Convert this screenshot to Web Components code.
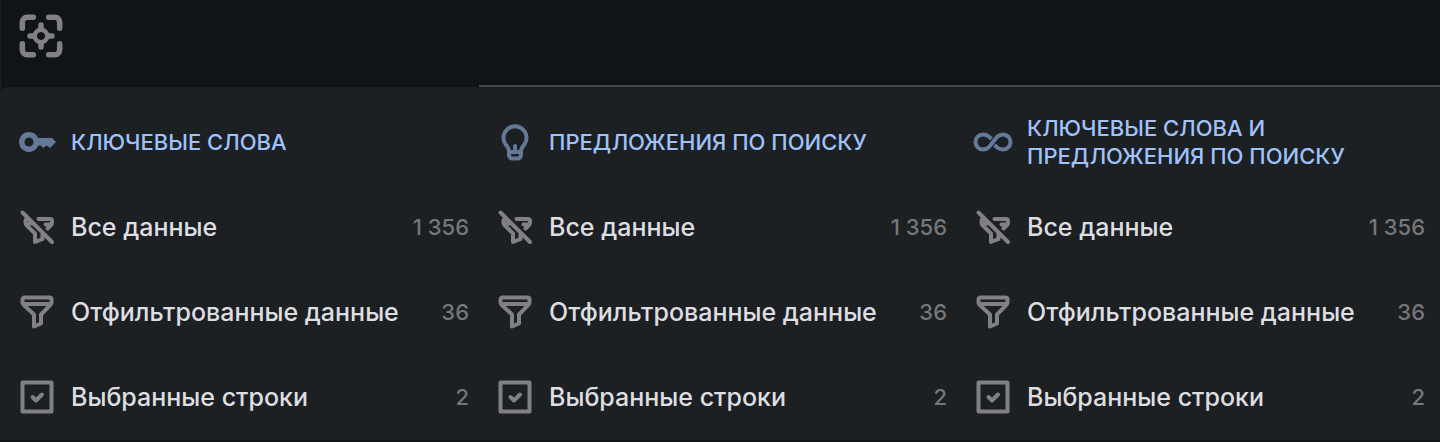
<!DOCTYPE html>
<html lang="ru">
<head>
<meta charset="utf-8">
<meta name="viewport" content="width=device-width, initial-scale=1">
<title>Данные</title>
<style>
    body
    {
        margin: 0;
        min-height: 100vh;
        background: #101318;
        font-family: Inter, "Liberation Sans", sans-serif;
        color: #dedee2;
    }
</style>
</head>
<body>
<export-panel>
    <focus-button slot="toolbar"></focus-button>
    <export-group icon="key" heading="Ключевые слова">
        <export-item icon="filter-off" count="1 356">Все данные</export-item>
        <export-item icon="filter" count="36">Отфильтрованные данные</export-item>
        <export-item icon="check" count="2">Выбранные строки</export-item>
    </export-group>
    <export-group icon="bulb" heading="Предложения по поиску">
        <export-item icon="filter-off" count="1 356">Все данные</export-item>
        <export-item icon="filter" count="36">Отфильтрованные данные</export-item>
        <export-item icon="check" count="2">Выбранные строки</export-item>
    </export-group>
    <export-group icon="infinity" heading="Ключевые слова и предложения по поиску">
        <export-item icon="filter-off" count="1 356">Все данные</export-item>
        <export-item icon="filter" count="36">Отфильтрованные данные</export-item>
        <export-item icon="check" count="2">Выбранные строки</export-item>
    </export-group>
</export-panel>

<script>
// every icon is drawn on a 40x40 grid
const icons = {
    'key': `<path fill="currentColor" stroke="none" fill-rule="evenodd" d="M12 10a10 10 0 0 1 9.200 6H35l4 4-6 6-3.500-2.500-3 2.500-3-2.500h-2.200A10 10 0 1 1 12 10zm0 5.500a4.500 4.500 0 1 0 0 9 4.500 4.500 0 0 0 0-9z"/>`,
    'bulb': `<path d="M14 33v-4c0-2.500-1.500-4-3-6a11.500 11.500 0 1 1 18 0c-1.500 2-3 3.500-3 6v4a3.500 3.500 0 0 1-3.500 3.500h-5A3.500 3.500 0 0 1 14 33zM14 30h12"/><path d="M20 24v5"/>`,
    'infinity': `<path stroke-linecap="butt" d="M18.500 17l-2.700-2.500C14.200 13.200 12.300 12.500 10 12.500a7.500 7.500 0 0 0 0 15c2.300 0 4.200-.9 5.800-2.300l8.400-10.400C25.800 13.400 27.700 12.500 30 12.500a7.500 7.500 0 0 1 0 15c-2.300 0-4.200-.7-5.800-2L21.500 23"/>`,
    'filter': `<path d="M7.500 5.500h25a2 2 0 0 1 2 2v2.700c0 1-.4 2-1.100 2.700L24 22.500v9l-7 3v-12l-10.400-9.600a3.800 3.800 0 0 1-1.100-2.700V7.500a2 2 0 0 1 2-2zM6.500 12h27"/>`,
    'filter-off': `<path d="M5.500 5.500l29.500 29.500M21.500 12H33a2 2 0 0 1 2 2v1.500c0 1-.3 1.800-1 2.500l-3.500 3.500M28.500 17.500H34M11 12c-1.800 0-2.500.8-2.500 2v1.500c0 1.200.4 2 1.200 2.800L18 26.500V35l7.500-3v-6M10 16.500h5"/>`,
    'check': `<path d="M5.500 5.500h29v29h-29z"/><path d="M15.500 20l3.500 3.500 6-6"/>`,
    'focus': `<g stroke-width="5"><path d="M3 13V7.500A4.500 4.500 0 0 1 7.500 3H13M27 3h5.500A4.500 4.500 0 0 1 37 7.500V13M37 27v5.500a4.500 4.500 0 0 1-4.500 4.500H27M13 37H7.500A4.500 4.500 0 0 1 3 32.500V27"/><path d="M20 10v3M20 27v3M10 20h3M27 20h3"/></g><path fill="currentColor" stroke="none" fill-rule="evenodd" d="M20 10.500l9.500 9.500-9.500 9.500-9.500-9.500zM20 16.300a3.700 3.700 0 1 0 0 7.400 3.700 3.700 0 0 0 0-7.400z"/><circle cx="20" cy="20" r="5.700"/>`
};

class UiIcon extends HTMLElement {

    constructor() {
        super();
        this.attachShadow({ mode: 'open' });
    }

    connectedCallback() {
        this.shadowRoot.innerHTML =
        `
        <style>
        :host
        {
            display: block;
            flex: none;
            width: var(--icon-size, 40px);
            height: var(--icon-size, 40px);
        }
        svg
        {
            display: block;
            width: 100%;
            height: 100%;
            fill: none;
            stroke: currentColor;
            stroke-width: 4;
            stroke-linecap: round;
            stroke-linejoin: round;
        }
        </style>
        <svg viewBox="0 0 40 40" aria-hidden="true">${icons[this.getAttribute('name')]}</svg>
        `;
    }
}
customElements.define('ui-icon', UiIcon);

class FocusButton extends HTMLElement {

    constructor() {
        super();
        this.attachShadow({ mode: 'open' });
    }

    connectedCallback() {
        this.shadowRoot.innerHTML =
        `
        <style>
        :host
        {
            display: block;
        }
        button
        {
            display: block;
            padding: 0;
            border: 0;
            background: none;
            color: #808085;
            cursor: pointer;
            --icon-size: 44px;
        }
        </style>
        <button type="button" aria-label="Экспорт"><ui-icon name="focus"></ui-icon></button>
        `;
    }
}
customElements.define('focus-button', FocusButton);

class ExportItem extends HTMLElement {

    constructor() {
        super();
        this.attachShadow({ mode: 'open' });
    }

    connectedCallback() {
        this.shadowRoot.innerHTML =
        `
        <style>
        :host
        {
            display: block;
        }
        button
        {
            display: flex;
            align-items: center;
            gap: 14px;
            box-sizing: border-box;
            width: 100%;
            min-height: 85px;
            padding: 0 10px 0 16px;
            border: 0;
            background: none;
            color: inherit;
            font: 500 25px/32px Inter, "Liberation Sans", sans-serif;
            text-align: left;
            white-space: nowrap;
            cursor: pointer;
        }
        button:hover
        {
            background: #252a2d;
        }
        ui-icon
        {
            color: #808085;
        }
        .label
        {
            flex: 1;
        }
        .count
        {
            color: #76777b;
            font-size: 22px;
        }
        </style>
        <button type="button">
            <ui-icon name="${this.getAttribute('icon')}"></ui-icon>
            <span class="label"><slot></slot></span>
            <span class="count">${this.getAttribute('count')}</span>
        </button>
        `;
    }
}
customElements.define('export-item', ExportItem);

class ExportGroup extends HTMLElement {

    constructor() {
        super();
        this.attachShadow({ mode: 'open' });
    }

    connectedCallback() {
        this.shadowRoot.innerHTML =
        `
        <style>
        :host
        {
            display: block;
            min-width: 0;
        }
        header
        {
            display: flex;
            align-items: center;
            gap: 14px;
            min-height: 85px;
            padding: 0 10px 0 16px;
        }
        ui-icon
        {
            color: #647998;
        }
        h2
        {
            margin: 0;
            color: #9fc2fb;
            font-size: 22px;
            line-height: 28px;
            font-weight: 500;
            text-transform: uppercase;
        }
        </style>
        <header>
            <ui-icon name="${this.getAttribute('icon')}"></ui-icon>
            <h2>${this.getAttribute('heading')}</h2>
        </header>
        <slot></slot>
        `;
    }
}
customElements.define('export-group', ExportGroup);

class ExportPanel extends HTMLElement {

    constructor() {
        super();
        this.attachShadow({ mode: 'open' });
    }

    connectedCallback() {
        this.shadowRoot.innerHTML =
        `
        <style>
        :host
        {
            display: block;
            border-left: 1px solid #1e1f20;
        }
        .toolbar
        {
            display: flex;
            align-items: center;
            height: 72px;
            padding: 0 18px 13px;
        }
        .line
        {
            height: 2px;
            margin-left: calc(100% / 3 - 2px);
            background: #44474a;
        }
        .groups
        {
            display: grid;
            grid-template-columns: repeat(3, 1fr);
            padding: 12px 5px 1px 0;
            border-top-left-radius: 8px;
            background: #1c2022;
        }
        </style>
        <div class="toolbar"><slot name="toolbar"></slot></div>
        <div class="line"></div>
        <div class="groups"><slot></slot></div>
        `;
    }
}
customElements.define('export-panel', ExportPanel);
</script>
</body>
</html>
